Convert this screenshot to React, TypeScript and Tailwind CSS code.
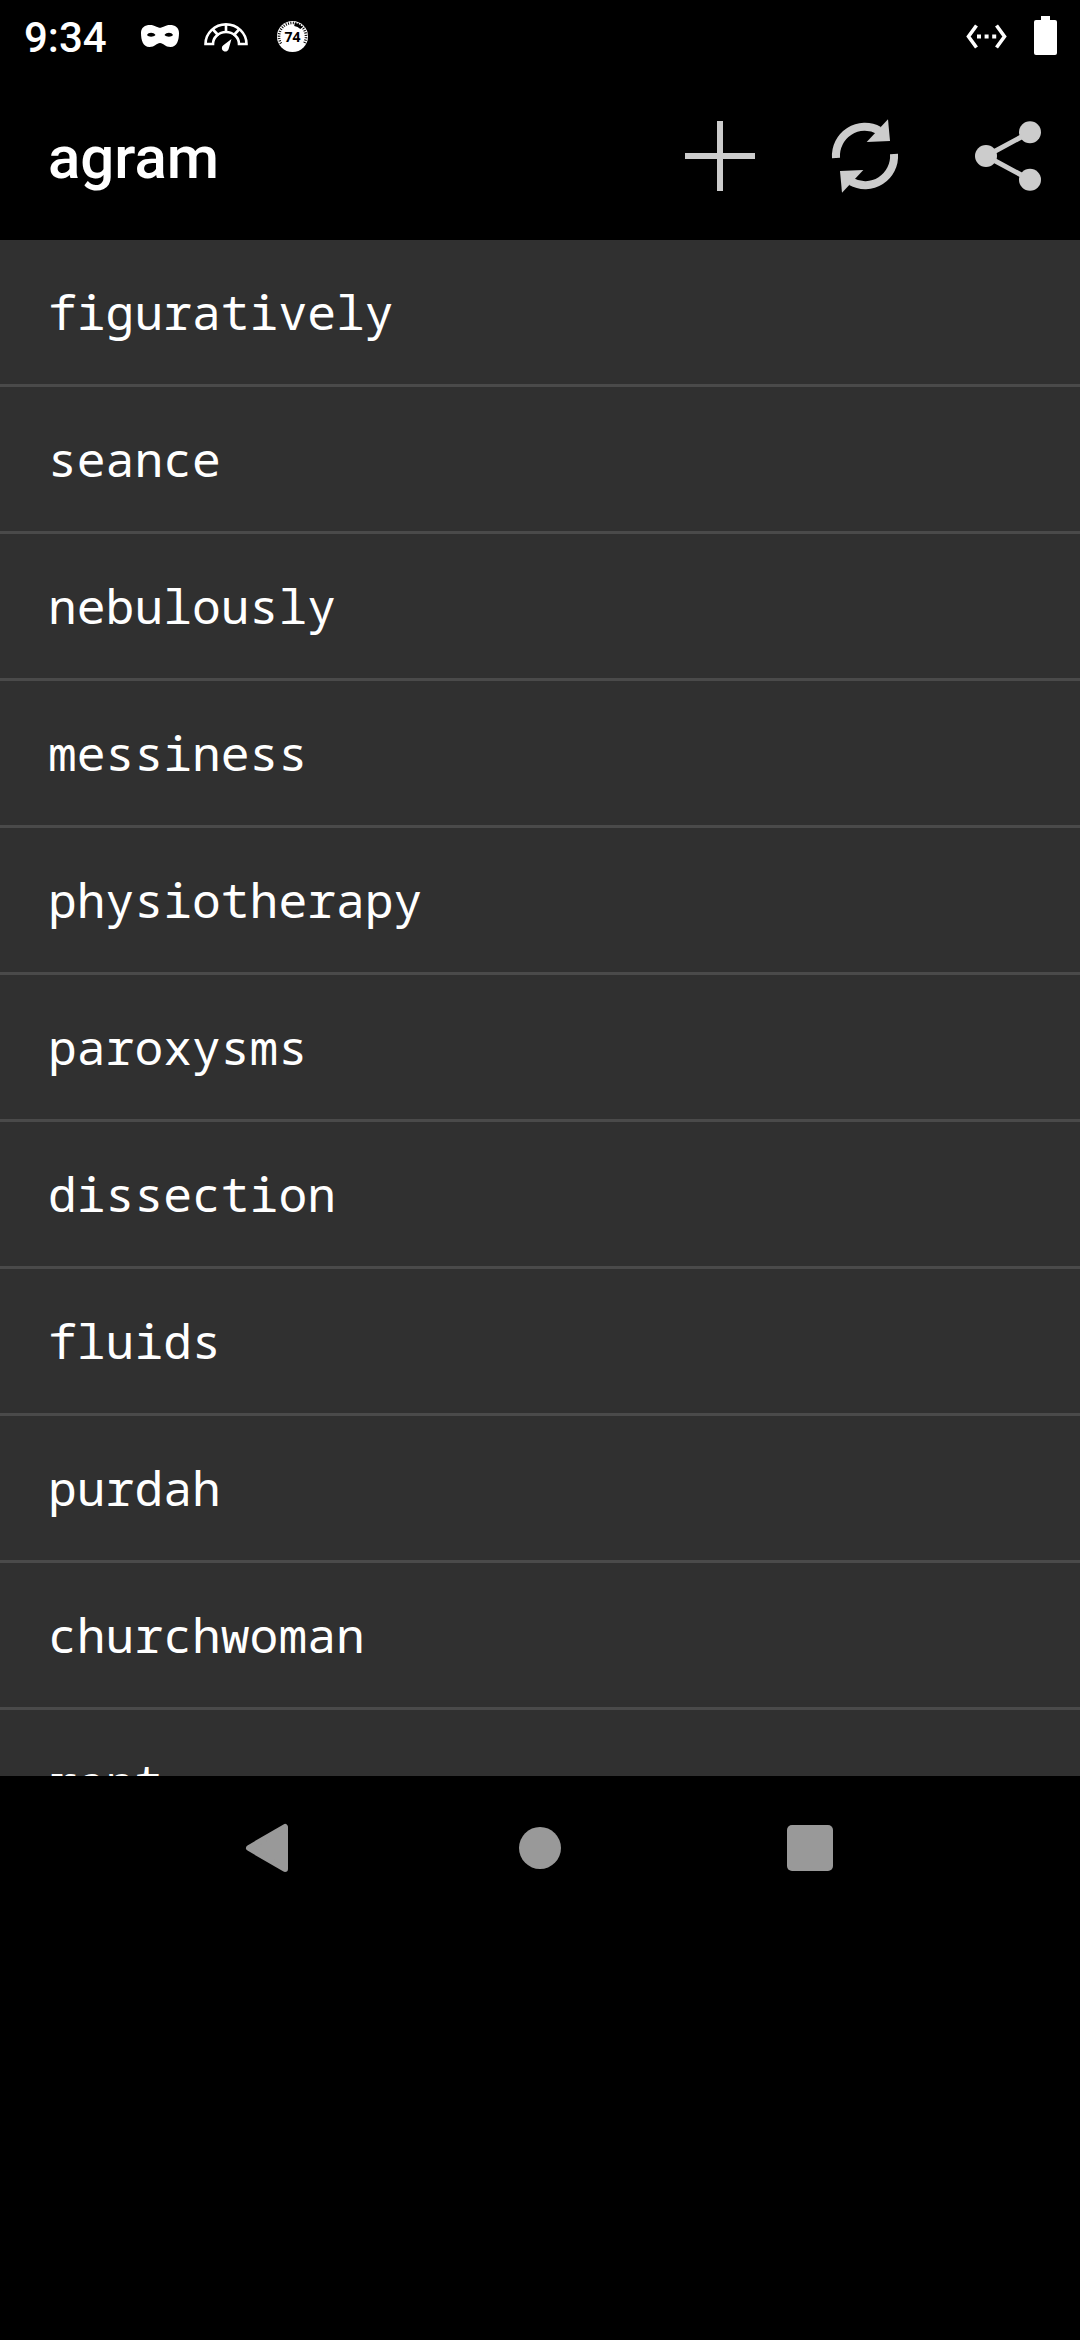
import React from "react";

const words = [
  "figuratively",
  "seance",
  "nebulously",
  "messiness",
  "physiotherapy",
  "paroxysms",
  "dissection",
  "fluids",
  "purdah",
  "churchwoman",
  "rent",
];

function MaskIcon() {
  return (
    <svg width="66" height="72" viewBox="0 0 66 72" fill="#fff" aria-hidden="true">
      <path
        fillRule="evenodd"
        d="M14 33C14 27.500 18 25 23 25C28 25 30.500 27.800 33 27.800C35.500 27.800 38 25 43 25C48 25 52 27.500 52 33C52 40 50 47 43.500 47C38 47 36.500 43 33 43C29.500 43 28 47 22.500 47C16 47 14 40 14 33ZM20 35C21.500 37.300 26.500 37.300 28.500 35C26.500 32 21.500 32 20 35ZM37.500 35C39.500 37.300 44.500 37.300 46 35C44.500 32 39.500 32 37.500 35Z"
      />
    </svg>
  );
}

function GaugeIcon() {
  return (
    <svg width="66" height="72" viewBox="0 0 66 72" aria-hidden="true">
      <g fill="none" stroke="#fff" strokeWidth="2.600">
        <path d="M12.500 44A20.500 19.600 0 0 1 53.500 44H46A13 12 0 0 0 20 44Z" />
        <path d="M33 24V32M19.500 29L25.500 35.500M46.500 29L40.500 35.500" />
      </g>
      <path d="M38.500 39L35.800 48.500A3.500 3.500 0 1 1 30.300 45.200Z" fill="#fff" />
    </svg>
  );
}

function BadgeIcon() {
  return (
    <svg width="66" height="72" viewBox="0 0 66 72" aria-hidden="true">
      <circle cx="33.500" cy="36.500" r="15.500" fill="#fff" />
      <path
        d="M22 43.500A13.500 13.500 0 1 1 45 43.500"
        fill="none"
        stroke="#000"
        strokeWidth="2.600"
        strokeDasharray="1 1.400"
      />
      <path d="M35.500 24.300A12.500 12.500 0 0 1 42.500 28" fill="none" stroke="#000" strokeWidth="3.200" />
      <text
        x="33.500"
        y="41.500"
        textAnchor="middle"
        fill="#000"
        fontSize="14"
        fontWeight="700"
        fontFamily="Open Sans, sans-serif"
      >
        74
      </text>
    </svg>
  );
}

function EthernetIcon() {
  return (
    <svg width="66" height="72" viewBox="0 0 66 72" aria-hidden="true">
      <path
        d="M22.500 25.500L14.500 36.500L22.500 47.500M42.500 25.500L50.500 36.500L42.500 47.500"
        fill="none"
        stroke="#fff"
        strokeWidth="3.600"
      />
      <path d="M23 34.500h4v4h-4zM30.600 34.500h4v4h-4zM38.200 34.500h4v4h-4z" fill="#fff" />
    </svg>
  );
}

function BatteryIcon() {
  return (
    <svg width="36" height="72" viewBox="0 0 36 72" fill="#fff" aria-hidden="true">
      <rect x="6" y="20" width="23" height="35" rx="2" />
      <rect x="13" y="16" width="9" height="5" />
    </svg>
  );
}

function ActionButton({ label, children }: { label: string; children: React.ReactNode }) {
  return (
    <button type="button" aria-label={label} className="flex size-36 items-center justify-center">
      <svg width="144" height="144" viewBox="0 0 144 144" fill="#ccc" aria-hidden="true">
        {children}
      </svg>
    </button>
  );
}

function NavButton({ label, children }: { label: string; children: React.ReactNode }) {
  return (
    <button type="button" aria-label={label} className="flex h-36 flex-1 items-center justify-center">
      <svg
        width="144"
        height="144"
        viewBox="0 0 144 144"
        fill="#999"
        stroke="#999"
        strokeLinejoin="round"
        aria-hidden="true"
      >
        {children}
      </svg>
    </button>
  );
}

export default function App() {
  return (
    <div className="flex h-screen flex-col bg-black font-['Roboto',sans-serif] text-white">
      <div className="flex h-[72px] shrink-0 items-center justify-between pl-6 pr-4">
        <div className="flex items-center gap-5">
          <time className="pt-1 text-[42px] font-medium leading-[72px]">9:34</time>
          <div className="flex">
            <MaskIcon />
            <GaugeIcon />
            <BadgeIcon />
          </div>
        </div>
        <div className="flex items-center gap-2">
          <EthernetIcon />
          <BatteryIcon />
        </div>
      </div>

      <header className="flex h-[168px] shrink-0 items-center justify-between pl-12">
        <h1 className="pt-1 text-[60px] font-medium leading-[72px]">agram</h1>
        <div className="flex">
          <ActionButton label="Add">
            <path d="M69 37h6v32h32v6h-32v32h-6v-32h-32v-6h32z" />
          </ActionButton>
          <ActionButton label="Refresh">
            <g id="half">
              <path d="M44 74A29 29 0 0 1 87 46.500" fill="none" stroke="#ccc" strokeWidth="8" />
              <path d="M96 35.300L98 57L74.700 58Z" />
            </g>
            <use href="#half" transform="rotate(180 73 72)" />
          </ActionButton>
          <ActionButton label="Share">
            <path d="M94 48.300L50 72L94 95.700" fill="none" stroke="#ccc" strokeWidth="5" />
            <circle cx="50" cy="72" r="11" />
            <circle cx="94" cy="48.300" r="11" />
            <circle cx="94" cy="95.700" r="11" />
          </ActionButton>
        </div>
      </header>

      <main className="min-h-0 flex-1 overflow-y-auto bg-[#303030] [scrollbar-width:none]">
        <ul className="divide-y-[3px] divide-[#4a4a4a]">
          {words.map((word) => (
            <li
              key={word}
              className="px-12 py-9 font-['Noto_Sans_Mono','DejaVu_Sans_Mono',monospace] text-[48px] leading-[72px]"
            >
              {word}
            </li>
          ))}
        </ul>
      </main>

      <nav className="flex shrink-0 px-[135px] pb-[420px]">
        <NavButton label="Back">
          <path d="M51 72L87 51V93Z" strokeWidth="6" />
        </NavButton>
        <NavButton label="Home">
          <circle cx="72" cy="72" r="21" stroke="none" />
        </NavButton>
        <NavButton label="Recent apps">
          <rect x="49" y="49" width="46" height="46" rx="5" stroke="none" />
        </NavButton>
      </nav>
    </div>
  );
}
